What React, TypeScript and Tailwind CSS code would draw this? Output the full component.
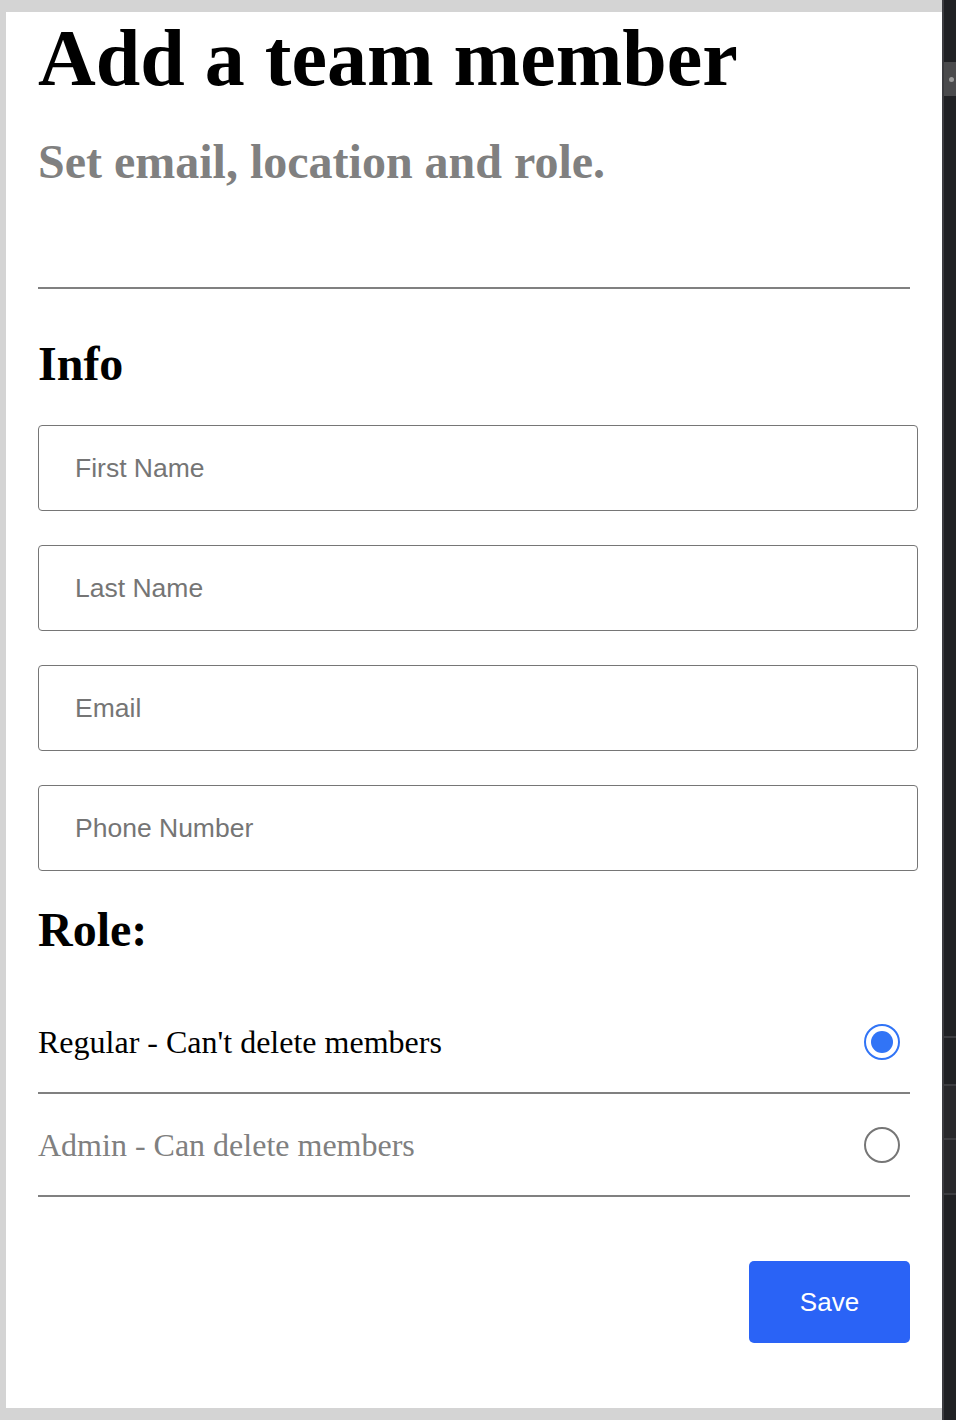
import { useState } from 'react'

const fields = ['First Name', 'Last Name', 'Email', 'Phone Number']

const roles = [
  { id: 'regular', label: "Regular - Can't delete members" },
  { id: 'admin', label: 'Admin - Can delete members' },
]

function Radio({ checked }: { checked: boolean }) {
  return checked ? (
    <span className="flex h-[36px] w-[36px] items-center justify-center rounded-full border-2 border-[#3174f6]">
      <span className="h-[22px] w-[22px] rounded-full bg-[#3174f6]" />
    </span>
  ) : (
    <span className="block h-[36px] w-[36px] rounded-full border-2 border-[#767676]" />
  )
}

export default function App() {
  const [role, setRole] = useState('regular')

  return (
    <div className="flex h-[1420px] w-[956px] overflow-hidden">
      {/* page area */}
      <div className="flex h-full w-[942px] flex-col bg-[#d4d4d4] pb-[12px] pl-[6px] pt-[12px]">
        <div className="flex flex-1 flex-col bg-white pl-[32px] pr-[32px] pb-[65px] font-['Liberation_Serif',serif]">
          <h1 className="text-[80px] font-bold leading-[92px] text-black">Add a team member</h1>
          <p className="mt-[30px] text-[48px] font-bold leading-[56px] text-[#808080]">
            Set email, location and role.
          </p>

          <div className="mt-[97px] h-[2px] w-full bg-[#808080]" />

          <h2 className="mt-[47px] text-[48px] font-bold leading-[56px] text-black">Info</h2>

          <div className="mt-[33px] flex flex-col gap-[34px]">
            {fields.map((f) => (
              <input
                key={f}
                placeholder={f}
                className="h-[86px] w-[880px] rounded-[4px] border border-[#767676] bg-white pl-[36px] font-['Liberation_Sans',Arial,sans-serif] text-[26.5px] text-black outline-none placeholder:text-[#757575]"
              />
            ))}
          </div>

          <h2 className="mt-[31px] text-[48px] font-bold leading-[56px] text-black">Role:</h2>

          <div className="mt-[33px] flex flex-col">
            {roles.map((r) => (
              <div
                key={r.id}
                onClick={() => setRole(r.id)}
                className="flex h-[103px] cursor-pointer items-center justify-between border-b-2 border-[#808080] pr-[10px]"
              >
                <span
                  className={
                    role === r.id
                      ? 'text-[32px] leading-[40px] text-black'
                      : 'text-[32px] leading-[40px] text-[#808080]'
                  }
                >
                  {r.label}
                </span>
                <Radio checked={role === r.id} />
              </div>
            ))}
          </div>

          <div className="mt-auto flex justify-end">
            <button className="h-[82px] w-[161px] rounded-[5px] bg-[#2a63f6] font-['Liberation_Sans',Arial,sans-serif] text-[26px] text-white">
              Save
            </button>
          </div>
        </div>
      </div>

      {/* dark side strip */}
      <div className="flex h-full w-[14px] border-l-2 border-[#3c3c40] bg-[#202124]">
        <div className="flex w-full flex-col">
          <div className="h-[62px]" />
          <div className="flex h-[34px] items-center justify-end bg-[#4a4a4c] pr-[2px]">
            <span className="h-[5px] w-[5px] rounded-full bg-[#9a9a9a]" />
          </div>
          <div className="h-[940px]" />
          <div className="h-[48px] border-t-2 border-[#3c3c40] bg-[#202124]" />
          <div className="h-[54px] border-t-2 border-[#3c3c40] bg-[#28282b]" />
          <div className="h-[55px] border-t-2 border-[#3c3c40] bg-[#28282b]" />
          <div className="flex-1 border-t-2 border-[#3c3c40] bg-[#202124]" />
        </div>
      </div>
    </div>
  )
}
